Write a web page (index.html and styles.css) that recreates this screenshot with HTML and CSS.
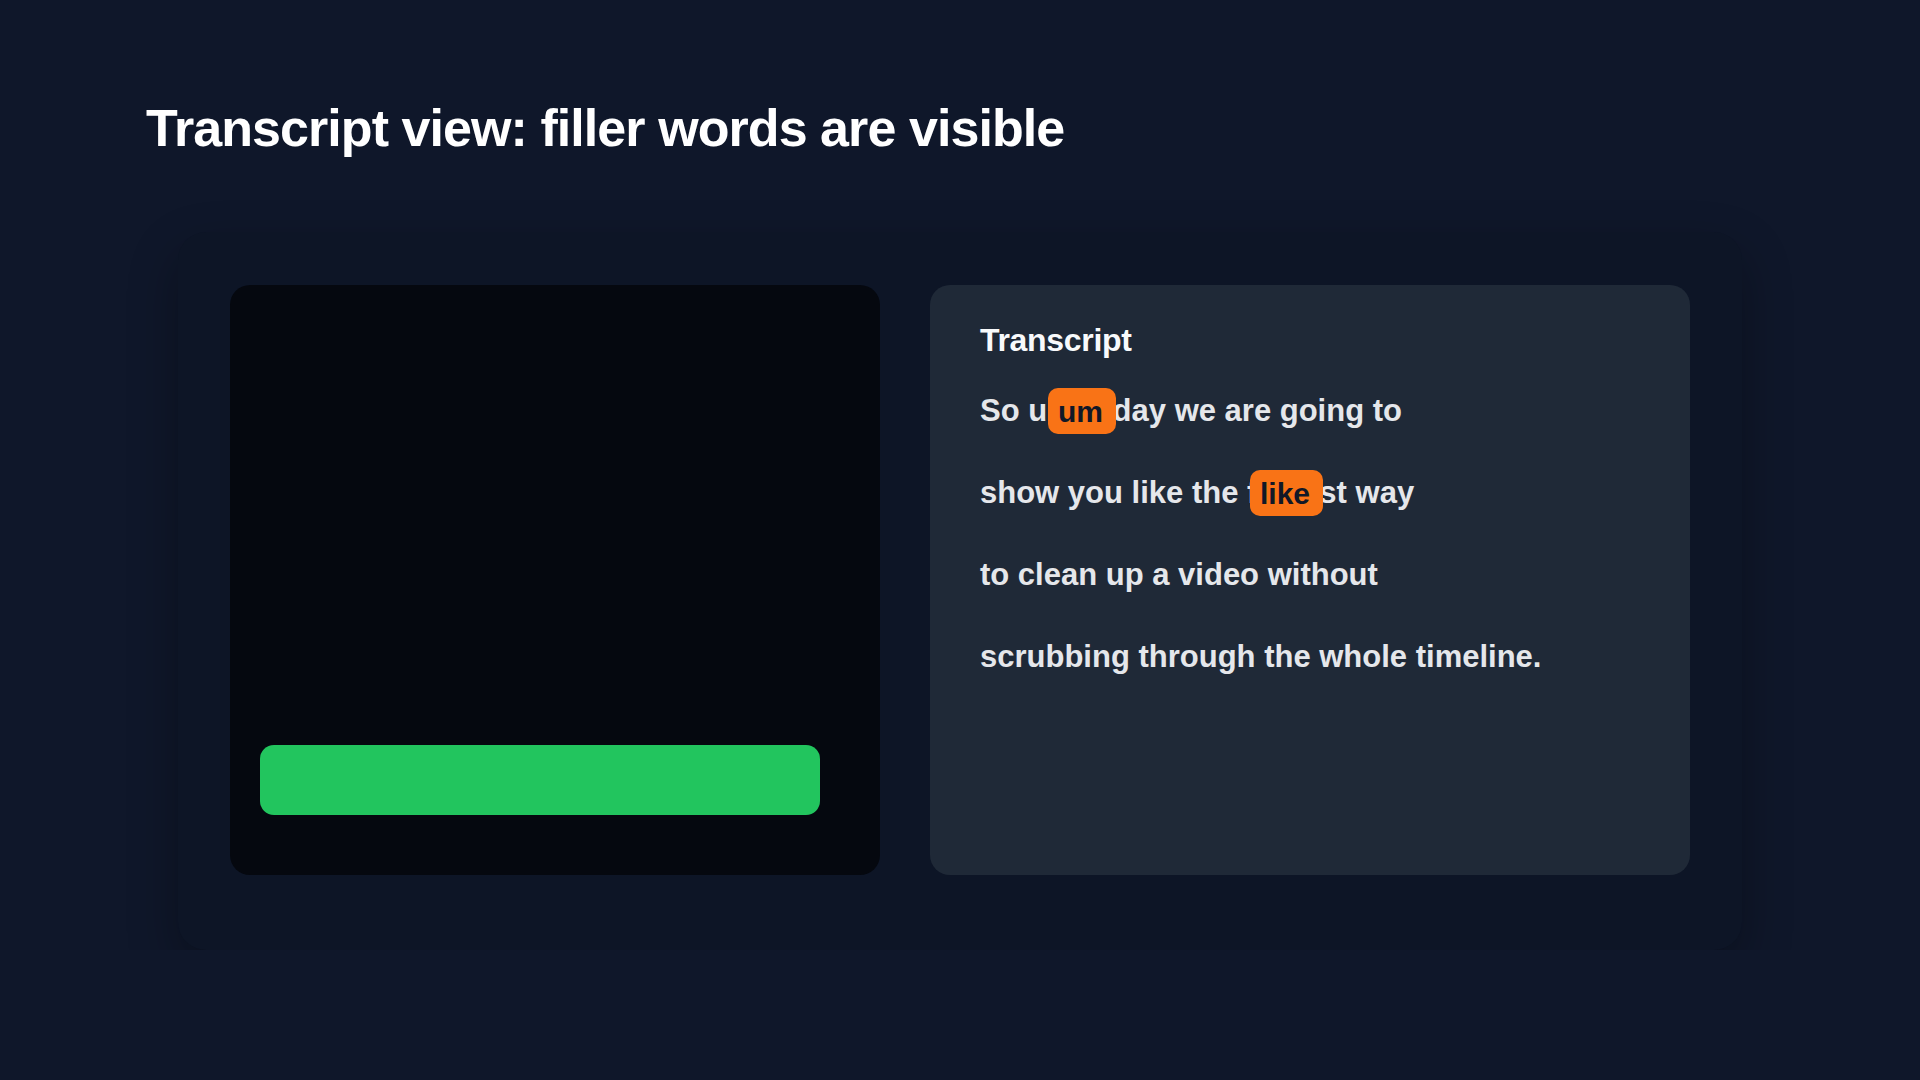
FILE: index.html
```html
<!DOCTYPE html>
<html lang="en">
<head>
	<meta charset="UTF-8">
	<meta name="viewport" content="width=device-width, initial-scale=1.0">
	<title>Transcript view</title>
	<link rel="stylesheet" href="styles.css">
</head>
<body>
	<div class="page">
		<h1 class="page-title">Transcript view: filler words are visible</h1>
		<div class="stage">
			<div class="player">
				<div class="player-bar"></div>
			</div>
			<div class="transcript">
				<div class="transcript-title">Transcript</div>
				<div class="transcript-body">
					<div class="line">So um today we are going to</div>
					<div class="line">show you like the fastest way</div>
					<div class="line">to clean up a video without</div>
					<div class="line">scrubbing through the whole timeline.</div>
					<span class="filler filler-um">um</span>
					<span class="filler filler-like">like</span>
				</div>
			</div>
		</div>
	</div>
</body>
</html>
```

FILE: styles.css
```css
body {
	background-color: #0f172a;
	color: #fff;
	font-family: "Liberation Sans", Arial, sans-serif;
	margin: 0;
	padding: 0;
}

.page {
	padding: 97px 146px 0;
}

.page-title {
	margin: 0;
	font-size: 52px;
	line-height: 1.2;
	font-weight: 700;
	letter-spacing: -0.018em;
	color: #fff;
}

.stage {
	margin: 73px 32px 0;
	padding: 53px 52px 75px;
	background-color: #0d1526;
	border-radius: 28px;
	box-shadow: 0 20px 50px rgba(0, 0, 0, 0.3);
	display: grid;
	grid-template-columns: 650px 760px;
	gap: 50px;
}

.player {
	height: 590px;
	background-color: #05080f;
	border-radius: 20px;
	padding: 0 60px 60px 30px;
	box-sizing: border-box;
	display: flex;
	flex-direction: column;
	justify-content: flex-end;
}

.player-bar {
	height: 70px;
	background-color: #22c55e;
	border-radius: 14px;
}

.transcript {
	height: 590px;
	background-color: #1f2937;
	border-radius: 20px;
	padding: 36px 50px;
	box-sizing: border-box;
}

.transcript-title {
	font-size: 32px;
	line-height: 1.2;
	font-weight: 700;
	letter-spacing: -0.01em;
	color: #f8fafc;
	margin-bottom: 10px;
}

.transcript-body {
	position: relative;
}

.line {
	font-size: 31px;
	line-height: 82px;
	font-weight: 700;
	color: #e5e7eb;
	white-space: nowrap;
}

/* filler word chips sit over the line they belong to */
.filler {
	position: absolute;
	height: 46px;
	padding: 0 13px 0 10px;
	border-radius: 10px;
	background-color: #f97316;
	color: #111827;
	font-size: 30px;
	font-weight: 700;
	line-height: 48px;
}
.filler-um {
	left: 68px;
	top: 18px;
}
.filler-like {
	left: 270px;
	top: 100px;
}
```
